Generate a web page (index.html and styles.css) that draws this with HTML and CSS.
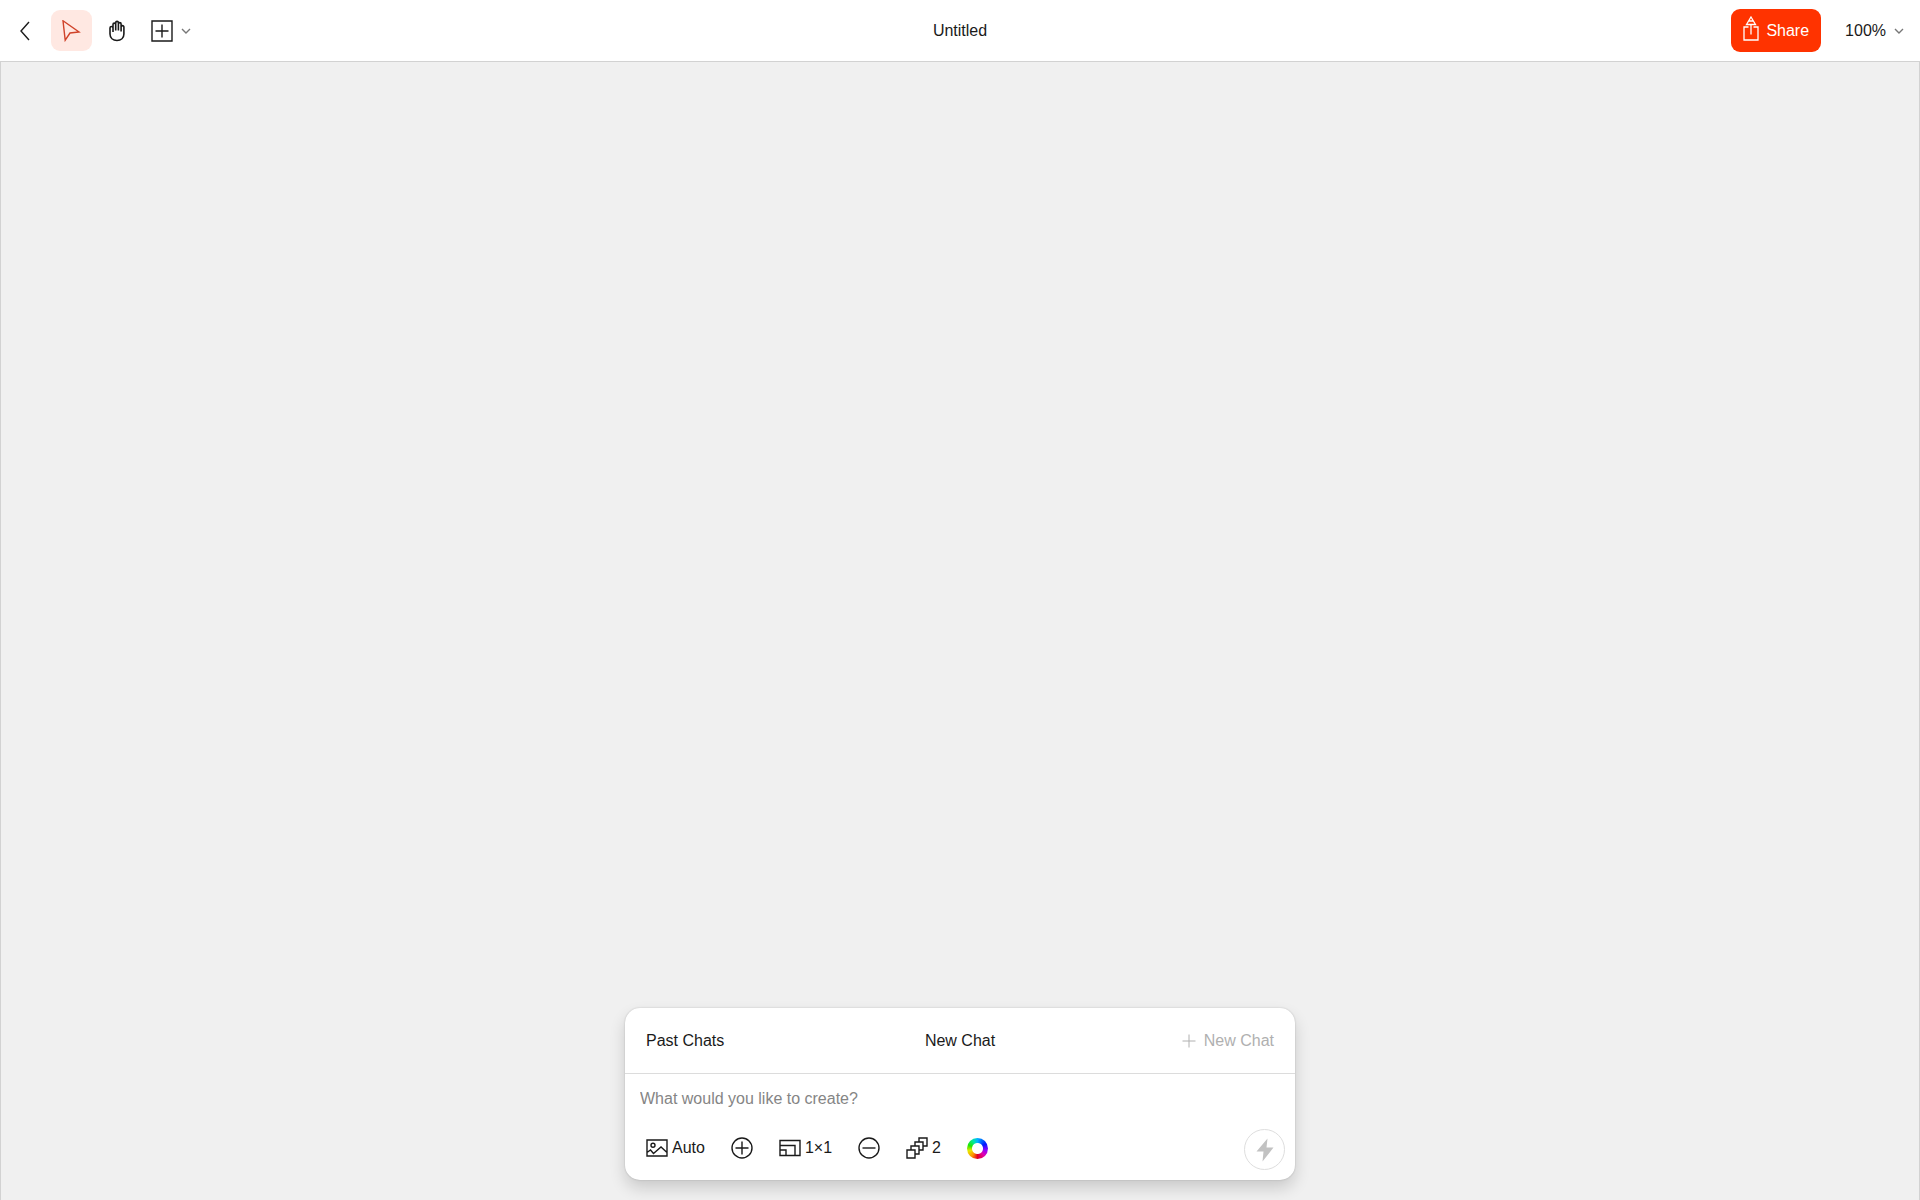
FILE: index.html
```html
<!DOCTYPE html>
<html lang="en">
<head>
  <meta charset="UTF-8">
  <meta name="viewport" content="width=device-width, initial-scale=1.0">
  <title>Untitled</title>
  <link rel="stylesheet" href="styles.css">
</head>
<body>
  <header class="topbar">
    <div class="tools">
      <button type="button" class="back" aria-label="Back">
        <svg width="10" height="20" viewBox="0 0 10 20"><path d="M9 1 L1 10 L9 19"/></svg>
      </button>
      <button type="button" class="tool active" aria-label="Select">
        <svg width="20" height="22" viewBox="0 0 20 22"><path d="M1 0.8 L17 12 L8 13 L3.2 20.2 Z"/></svg>
      </button>
      <button type="button" class="tool" aria-label="Pan">
        <svg class="hand" width="16" height="22" viewBox="0 0 16 22"><path d="M1 8 a1.5 1.5 0 0 1 3 0 V4.5 a1.3 1.3 0 0 1 2.7 0 V2.7 a1.3 1.3 0 0 1 2.7 0 V4 a1.3 1.3 0 0 1 2.7 0 V7 a1.4 1.4 0 0 1 2.8 0 V14 C14.9 18 12 20.5 8 20.5 C4 20.5 1 18 1 14 Z M4 8 V12 M6.7 4.5 V10.5 M9.4 4 V10.5 M12.1 7 V11.5"/></svg>
      </button>
      <button type="button" class="insert" aria-label="Insert">
        <svg width="22" height="22" viewBox="0 0 22 22"><path d="M1 1 H21 V21 H1 Z M11 4.5 V17.5 M4.5 11 H17.5"/></svg>
        <svg class="chevron" width="10" height="6" viewBox="0 0 10 6"><path d="M1 1 L5 5 L9 1"/></svg>
      </button>
    </div>

    <h1>Untitled</h1>

    <div class="actions">
      <button type="button" class="share">
        <svg width="16" height="25" viewBox="0 0 16 25"><path d="M5.5 11 H1 V24 H15 V11 H10.5 M8 8.5 V18.5 M8 1 L12.5 8.5 H3.5 Z M6 5 H10"/></svg>
        Share
      </button>
      <button type="button" class="zoom">
        100%
        <svg class="chevron" width="10" height="6" viewBox="0 0 10 6"><path d="M1 1 L5 5 L9 1"/></svg>
      </button>
    </div>
  </header>

  <main class="canvas">
    <section class="chat">
      <div class="chat-header">
        <button type="button">Past Chats</button>
        <h2>New Chat</h2>
        <button type="button" class="new-chat" disabled>
          <svg width="14" height="14" viewBox="0 0 14 14"><path d="M7 0.5 V13.5 M0.5 7 H13.5"/></svg>
          New Chat
        </button>
      </div>

      <form class="chat-form">
        <input type="text" aria-label="Prompt" placeholder="What would you like to create?">
        <div class="options">
          <button type="button" class="option">
            <svg width="22" height="18" viewBox="0 0 22 18"><path d="M1 1 H21 V17 H1 Z M1 13.5 L4.5 11 L7.5 14.5 L15 8 L21 13.5"/><circle cx="7" cy="6.2" r="2"/></svg>
            Auto
          </button>
          <button type="button" class="option" aria-label="Add">
            <svg width="22" height="22" viewBox="0 0 22 22"><circle cx="11" cy="11" r="10"/><path d="M11 4.5 V17.5 M4.5 11 H17.5"/></svg>
          </button>
          <button type="button" class="option">
            <svg width="22" height="18" viewBox="0 0 22 18"><path d="M1 1.5 H21 V16.5 H1 Z M1 6.5 H16 V16.5 M1 11 H7 V16.5"/></svg>
            1×1
          </button>
          <button type="button" class="option" aria-label="Remove">
            <svg width="22" height="22" viewBox="0 0 22 22"><circle cx="11" cy="11" r="10"/><path d="M4.5 11 H17.5"/></svg>
          </button>
          <button type="button" class="option">
            <svg width="22" height="22" viewBox="0 0 22 22"><path d="M1 13 H9 V21 H1 Z M5 13 V9 H13 V17 H9 M9 9 V5 H17 V13 H13 M13 5 V1 H21 V9 H17"/></svg>
            2
          </button>
          <button type="button" class="option" aria-label="Colors">
            <span class="wheel"></span>
          </button>
          <button type="submit" class="generate" aria-label="Generate" disabled>
            <svg width="18" height="24" viewBox="0 0 18 24"><path d="M11.5 0.5 L0.5 13.5 H7.5 L6.5 23.5 L17.5 9.5 H10.5 Z"/></svg>
          </button>
        </div>
      </form>
    </section>
  </main>
</body>
</html>
```
FILE: styles.css
```css
* {
  box-sizing: border-box;
}

body {
  display: flex;
  flex-direction: column;
  min-height: 100vh;
  margin: 0;
  background-color: #fff;
  color: #1a1a1a;
  font-family: "Liberation Sans", Arial, sans-serif;
  font-size: 16px;
  line-height: 20px;
}

h1, h2 {
  margin: 0;
  font-size: 16px;
  font-weight: 400;
  text-align: center;
}

button {
  display: flex;
  align-items: center;
  padding: 0;
  border: none;
  background: none;
  color: inherit;
  font: inherit;
  cursor: pointer;
}

svg {
  display: block;
  flex: none;
  fill: none;
  stroke: currentColor;
  stroke-width: 1.4;
}

.chevron {
  color: #777;
}

/* Top bar */
.topbar {
  display: grid;
  grid-template-columns: 1fr auto 1fr;
  align-items: center;
  height: 61px;
  padding: 0 16px;
}

.tools {
  display: flex;
  align-items: center;
  gap: 4px;
}

.back {
  justify-content: center;
  width: 18px;
  height: 41px;
  margin-right: 13px;
}

.tool {
  justify-content: center;
  width: 41px;
  height: 41px;
  border-radius: 9px;
}

.active {
  background-color: #ffe8e2;
  color: #d0432a;
}

.hand {
  stroke-width: 1.6;
}

.insert {
  gap: 8px;
  height: 41px;
  margin-left: 10px;
}

.actions {
  display: flex;
  align-items: center;
  justify-content: flex-end;
  gap: 24px;
}

.share {
  gap: 7px;
  height: 43px;
  padding: 0 12px;
  border-radius: 9px;
  background-color: #ff3300;
  color: #fff;
}

.share svg {
  margin-bottom: 5px;
  stroke-width: 1.3;
}

.zoom {
  gap: 8px;
}

/* Canvas */
.canvas {
  display: flex;
  flex: 1;
  align-items: flex-end;
  justify-content: center;
  padding: 20px;
  border: 1px solid #d2d2d2;
  border-bottom: none;
  background-color: #f0f0f0;
}

.chat {
  width: 100%;
  max-width: 670px;
  border-radius: 15px;
  background-color: #fff;
  box-shadow: 0 0 2px rgba(0, 0, 0, 0.2), 0 8px 16px rgba(0, 0, 0, 0.16);
}

.chat-header {
  display: grid;
  grid-template-columns: 1fr auto 1fr;
  align-items: center;
  height: 66px;
  padding: 0 21px;
  border-bottom: 1px solid #dcdcdc;
}

.new-chat {
  gap: 8px;
  justify-self: end;
  color: #b0b0b0;
  cursor: default;
}

.new-chat svg {
  stroke-width: 1;
}

.chat-form {
  padding: 14px 10px 10px 15px;
}

.chat-form input {
  display: block;
  width: 100%;
  height: 22px;
  padding: 0;
  border: none;
  outline: none;
  background: none;
  color: inherit;
  font: inherit;
}

.chat-form input::placeholder {
  color: #858585;
  opacity: 1;
}

.options {
  display: flex;
  align-items: flex-start;
  gap: 26px;
  margin-top: 19px;
  padding-left: 6px;
}

.option {
  gap: 4px;
  height: 38px;
}

.wheel {
  width: 21px;
  height: 21px;
  border-radius: 50%;
  background: radial-gradient(circle, #fff 5px, transparent 6px),
    conic-gradient(#00b4ff, #0018ff 60deg, #8a00ff 100deg, #e000b0 135deg, #e00020 180deg, #ff9000 215deg, #e8e800 255deg, #20e800 290deg, #00e8a0 330deg, #00b4ff);
}

.generate {
  justify-content: center;
  width: 41px;
  height: 41px;
  margin-left: auto;
  border: 1px solid #dedede;
  border-radius: 50%;
  cursor: default;
}

.generate svg {
  fill: #c2c2c2;
  stroke: none;
}
```
